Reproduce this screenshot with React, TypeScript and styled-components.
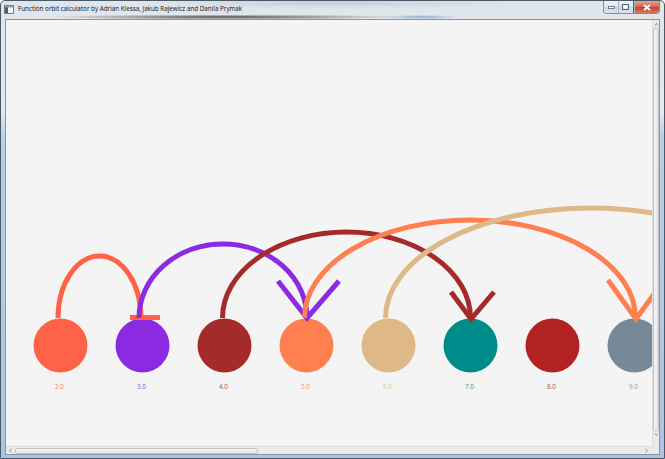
import React from 'react';
import styled, { createGlobalStyle } from 'styled-components';

const Global = createGlobalStyle`
  html, body { margin: 0; padding: 0; background: #ffffff; }
  body { width: 665px; height: 459px; overflow: hidden; font-family: "Open Sans", "Liberation Sans", Arial, sans-serif; }
`;

const Window = styled.div`
  box-sizing: border-box;
  width: 665px;
  height: 459px;
  display: flex;
  flex-direction: column;
  border: 1px solid #4a5868;
  border-radius: 5px 5px 0 0;
  padding: 0 4px 3px 4px;
  background:
    linear-gradient(to bottom, #dfe5ec 0px, #e6eaef 110px, #b9cfe7 135px, #aac5e3 100%);
`;

const TitleBar = styled.div`
  height: 18px;
  display: flex;
  align-items: flex-start;
  margin: 0 -4px;
  padding: 0 4px 0 3px;
  background:
    radial-gradient(ellipse 175px 2.5px at 225px 16px, rgba(30, 34, 40, 0.75), rgba(30, 34, 40, 0) 100%),
    radial-gradient(ellipse 40px 2px at 420px 16px, rgba(90, 130, 190, 0.6), rgba(90, 130, 190, 0) 100%),
    radial-gradient(ellipse 200px 6px at 330px 2px, rgba(150, 170, 195, 0.35), rgba(150, 170, 195, 0) 100%);
`;

const TitleIcon = styled.svg`
  flex: none;
  margin-top: 4px;
  width: 10px;
  height: 9px;
`;

const TitleText = styled.span`
  margin-left: 4px;
  margin-top: 3px;
  font-family: "Open Sans", "Liberation Sans", Arial, sans-serif;
  font-size: 6.3px;
  line-height: 9px;
  color: #111111;
  white-space: nowrap;
`;

const Buttons = styled.div`
  margin-left: auto;
  display: flex;
  height: 12px;
  border: 1px solid #7d8ea3;
  border-top: none;
  border-radius: 0 0 4px 4px;
  overflow: hidden;
`;

const WinButton = styled.div<{ $w: number; $danger?: boolean }>`
  width: ${(p) => p.$w}px;
  display: flex;
  align-items: center;
  justify-content: center;
  border-left: ${(p) => (p.$danger ? '1px solid #8c4a4a' : 'none')};
  background: ${(p) =>
    p.$danger
      ? 'linear-gradient(to bottom, #e3a593 0%, #cf6a58 45%, #c44535 55%, #d77a62 100%)'
      : 'linear-gradient(to bottom, #eef2f6 0%, #dde5ee 45%, #cdd7e2 55%, #dce4ec 100%)'};
  & + & { box-shadow: inset 1px 0 0 #a8b5c4; }
`;

const Client = styled.div`
  display: grid;
  grid-template-columns: 646px 7px;
  grid-template-rows: 426px 8px;
  border: 1px solid #8497ad;
  background: #f4f4f4;
`;

const Canvas = styled.div`
  background: #f4f4f4;
  overflow: hidden;
`;

const Graph = styled.svg`
  display: block;
`;

const Label = styled.text`
  font-family: "Open Sans", "Liberation Sans", Arial, sans-serif;
  font-size: 6.3px;
  text-anchor: middle;
  opacity: 0.85;
`;

const VScroll = styled.div`
  display: flex;
  flex-direction: column;
  align-items: center;
  background: #eaeaea;
  border-left: 1px solid #dedede;
`;

const HScroll = styled.div`
  display: flex;
  align-items: center;
  background: #eaeaea;
  border-top: 1px solid #dedede;
  padding: 0 3px 0 2px;
`;

const Corner = styled.div`
  background: #eaeaea;
`;

const Chevron = styled.svg<{ $mt?: number; $mb?: number }>`
  flex: none;
  width: 5px;
  height: 5px;
  margin-top: ${(p) => p.$mt ?? 0}px;
  margin-bottom: ${(p) => p.$mb ?? 0}px;
`;

const VThumb = styled.div`
  flex: 1;
  width: 4px;
  margin: 1px 0;
  border: 1px solid #c4c4c4;
  border-radius: 2px;
  background: linear-gradient(to right, #f6f6f6, #e2e2e2);
`;

const HThumb = styled.div`
  width: 241px;
  height: 4px;
  margin-left: 2px;
  border: 1px solid #c4c4c4;
  border-radius: 2px;
  background: linear-gradient(to bottom, #f6f6f6, #e2e2e2);
`;

const Spacer = styled.div`
  flex: 1;
`;

const nodes = [
  { v: '2.0', color: '#FF6347' },
  { v: '3.0', color: '#8A2BE2' },
  { v: '4.0', color: '#A52A2A' },
  { v: '5.0', color: '#FF7F50' },
  { v: '6.0', color: '#DEB887' },
  { v: '7.0', color: '#008B8B' },
  { v: '8.0', color: '#B22222' },
  { v: '9.0', color: '#778899' },
];

const arcs = [
  { color: '#FF6347', d: 'M 58 318 A 41.5 62 0 0 1 141 318', arrow: 'M 130 317.5 L 160 317.5' },
  { color: '#8A2BE2', d: 'M 139 318 A 84 74 0 0 1 307 318', arrow: 'M 278 281 L 307 318 L 339 281' },
  { color: '#A52A2A', d: 'M 222.5 318 A 124 86 0 0 1 470.5 318', arrow: 'M 451 292 L 471 319 L 494 292' },
  { color: '#FF7F50', d: 'M 304.5 318 A 165.5 98 0 0 1 635.5 318', arrow: 'M 608 280 L 636 319 L 664 280' },
  { color: '#DEB887', d: 'M 385.5 318 A 205 110 0 0 1 795.5 318', arrow: '' },
];

const cx = (i: number) => 60.5 + 82 * i;

export default function App() {
  return (
    <>
      <Global />
      <Window>
        <TitleBar>
          <TitleIcon viewBox="0 0 10 9">
            <rect x="0.5" y="0.5" width="9" height="8" fill="#f4f6f8" stroke="#6d7f93" />
            <rect x="1" y="1" width="3" height="7" fill="#3d6b4a" />
            <rect x="1" y="1" width="8" height="1.5" fill="#8aa5c4" />
          </TitleIcon>
          <TitleText>Function orbit calculator by Adrian Klessa, Jakub Rajewicz and Danila Prymak</TitleText>
          <Buttons>
            <WinButton $w={14}>
              <svg width="7" height="3" viewBox="0 0 7 3">
                <rect x="0.5" y="0.5" width="6" height="2" fill="#ffffff" stroke="#55657a" strokeWidth="0.8" />
              </svg>
            </WinButton>
            <WinButton $w={15}>
              <svg width="7" height="6" viewBox="0 0 7 6">
                <rect x="0.5" y="0.5" width="6" height="5" fill="none" stroke="#55657a" strokeWidth="1" />
                <rect x="1.5" y="1.8" width="4" height="2.7" fill="#ffffff" />
              </svg>
            </WinButton>
            <WinButton $w={25} $danger>
              <svg width="8" height="7" viewBox="0 0 8 7">
                <path d="M1 1 L7 6 M7 1 L1 6" stroke="#ffffff" strokeWidth="1.8" />
              </svg>
            </WinButton>
          </Buttons>
        </TitleBar>
        <Client>
          <Canvas>
            <Graph width={646} height={426} viewBox="6 20 646 426">
              {nodes.map((n, i) => (
                <circle key={n.v} cx={cx(i)} cy={345.5} r={27} fill={n.color} />
              ))}
              {nodes.map((n, i) => (
                <Label key={'l' + n.v} x={cx(i) - 1} y={389} fill={n.color}>
                  {n.v}
                </Label>
              ))}
              {arcs.map((a, i) => (
                <g key={i} fill="none" stroke={a.color} strokeWidth={5}>
                  <path d={a.d} />
                  {a.arrow && <path d={a.arrow} strokeLinejoin="miter" />}
                </g>
              ))}
            </Graph>
          </Canvas>
          <VScroll>
            <Chevron viewBox="0 0 5 5" $mt={2}>
              <path d="M0.8 3.5 L2.5 1.5 L4.2 3.5" fill="none" stroke="#7a7a7a" strokeWidth="0.8" />
            </Chevron>
            <VThumb />
            <Chevron viewBox="0 0 5 5" $mb={9}>
              <path d="M0.8 1.5 L2.5 3.5 L4.2 1.5" fill="none" stroke="#7a7a7a" strokeWidth="0.8" />
            </Chevron>
          </VScroll>
          <HScroll>
            <Chevron viewBox="0 0 5 5">
              <path d="M3.5 0.8 L1.5 2.5 L3.5 4.2" fill="none" stroke="#7a7a7a" strokeWidth="0.8" />
            </Chevron>
            <HThumb />
            <Spacer />
            <Chevron viewBox="0 0 5 5">
              <path d="M1.5 0.8 L3.5 2.5 L1.5 4.2" fill="none" stroke="#7a7a7a" strokeWidth="0.8" />
            </Chevron>
          </HScroll>
          <Corner />
        </Client>
      </Window>
    </>
  );
}
